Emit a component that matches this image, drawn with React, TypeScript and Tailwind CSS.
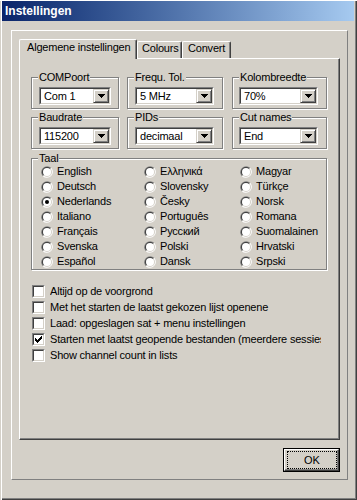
import React from 'react';

const COL1 = ['English', 'Deutsch', 'Nederlands', 'Italiano', 'Français', 'Svenska', 'Español'];
const COL2 = ['Ελληνικά', 'Slovensky', 'Česky', 'Português', 'Русский', 'Polski', 'Dansk'];
const COL3 = ['Magyar', 'Türkçe', 'Norsk', 'Romana', 'Suomalainen', 'Hrvatski', 'Srpski'];

const OPTIONS = [
  { label: 'Altijd op de voorgrond', checked: false },
  { label: 'Met het starten de laatst gekozen lijst openene', checked: false },
  { label: 'Laad: opgeslagen sat + menu instellingen', checked: false },
  { label: 'Starten met laatst geopende bestanden (meerdere sessies)', checked: true },
  { label: 'Show channel count in lists', checked: false },
];

// klein zwart pijltje in de combo knop
function DownArrow() {
  return (
    <svg width="7" height="4" viewBox="0 0 7 4" shapeRendering="crispEdges">
      <rect x="0" y="0" width="7" height="1" fill="#000" />
      <rect x="1" y="1" width="5" height="1" fill="#000" />
      <rect x="2" y="2" width="3" height="1" fill="#000" />
      <rect x="3" y="3" width="1" height="1" fill="#000" />
    </svg>
  );
}

function Combo({ value, w }: { value: string; w: string }) {
  return (
    <div className={`${w} h-[18px] border border-t-[#808080] border-l-[#808080] border-r-white border-b-white`}>
      <div className="h-full flex border border-t-[#404040] border-l-[#404040] border-r-[#D4D0C8] border-b-[#D4D0C8] bg-white">
        <span className="flex-1 pl-[3px] leading-[14px] whitespace-nowrap overflow-hidden">{value}</span>
        <div className="w-[16px] h-[14px] flex items-center justify-center bg-[#D4D0C8] border border-t-[#D4D0C8] border-l-[#D4D0C8] border-r-[#404040] border-b-[#404040] shadow-[inset_1px_1px_0_#fff,inset_-1px_-1px_0_#808080]">
          <DownArrow />
        </div>
      </div>
    </div>
  );
}

function GroupBox({ label, className, children }: { label: string; className: string; children?: React.ReactNode }) {
  return (
    <div className={`relative border border-[#808080] shadow-[inset_1px_1px_0_#fff,1px_1px_0_#fff] ${className}`}>
      <span className="absolute left-[6px] top-[-7px] bg-[#D4D0C8] px-[1px] leading-[13px] whitespace-nowrap">{label}</span>
      {children}
    </div>
  );
}

function Radio({ label, checked }: { label: string; checked?: boolean }) {
  return (
    <div className="h-[15px] flex items-center">
      <svg width="12" height="12" viewBox="0 0 12 12" className="shrink-0">
        <path d="M1.76 10.24 A6 6 0 0 1 10.24 1.76 Z" fill="#808080" />
        <path d="M10.24 1.76 A6 6 0 0 1 1.76 10.24 Z" fill="#fff" />
        <path d="M2.46 9.54 A5 5 0 0 1 9.54 2.46 Z" fill="#404040" />
        <path d="M9.54 2.46 A5 5 0 0 1 2.46 9.54 Z" fill="#D4D0C8" />
        <circle cx="6" cy="6" r="4" fill="#fff" />
        {checked && <circle cx="6" cy="6" r="2" fill="#000" />}
      </svg>
      <span className="ml-[4px] whitespace-nowrap">{label}</span>
    </div>
  );
}

function CheckMark() {
  return (
    <svg width="7" height="7" viewBox="0 0 7 7" shapeRendering="crispEdges">
      <rect x="0" y="2" width="1" height="3" fill="#000" />
      <rect x="1" y="3" width="1" height="3" fill="#000" />
      <rect x="2" y="4" width="1" height="3" fill="#000" />
      <rect x="3" y="3" width="1" height="3" fill="#000" />
      <rect x="4" y="2" width="1" height="3" fill="#000" />
      <rect x="5" y="1" width="1" height="3" fill="#000" />
      <rect x="6" y="0" width="1" height="3" fill="#000" />
    </svg>
  );
}

function CheckRow({ label, checked }: { label: string; checked: boolean }) {
  return (
    <div className="h-[16px] flex items-center">
      <div className="w-[13px] h-[13px] shrink-0 border border-t-[#808080] border-l-[#808080] border-r-white border-b-white">
        <div className="w-full h-full flex items-center justify-center bg-white border border-t-[#404040] border-l-[#404040] border-r-[#D4D0C8] border-b-[#D4D0C8]">
          {checked && <CheckMark />}
        </div>
      </div>
      <span className="ml-[5px] w-[271px] overflow-hidden whitespace-nowrap">{label}</span>
    </div>
  );
}

export default function App() {
  return (
    <div className="w-[357px] h-[500px] bg-[#D4D0C8] text-black text-[11px] tracking-[-0.2px] font-['Liberation_Sans',Arial,sans-serif]">
      <div className="w-[357px] h-[499px] bg-[#D4D0C8] shadow-[inset_1px_0_0_#D4D0C8,inset_2px_0_0_#fff,inset_-1px_-1px_0_#404040,inset_-2px_-2px_0_#808080]">
        {/* Titelbalk */}
        <div className="mt-[1px] ml-[2px] w-[352px] h-[20px] bg-linear-to-r from-[#0A246A] to-[#A6CAF0] flex items-center pl-[3px]">
          <span className="text-white font-bold text-[12px] tracking-normal">Instellingen</span>
        </div>

        {/* Buitenkader */}
        <div className="mt-[9px] ml-[11px] w-[337px] h-[450px] border border-t-white border-l-white border-r-[#808080] border-b-[#808080] pl-[7px] pt-[8px]">
          {/* Tabs */}
          <div className="flex items-end h-[20px]">
            <div className="relative z-10 w-[118px] h-[20px] bg-[#D4D0C8] pl-[7px] pt-[1px] leading-[13px] whitespace-nowrap border-l border-t border-r border-l-white border-t-white border-r-[#404040] rounded-tl-[2px] rounded-tr-[2px] shadow-[inset_-1px_0_0_#808080]">
              Algemene instellingen
            </div>
            <div className="w-[45px] h-[18px] pl-[4px] leading-[13px] whitespace-nowrap border-l border-t border-r border-l-white border-t-white border-r-[#404040] rounded-tl-[2px] rounded-tr-[2px] shadow-[inset_-1px_0_0_#808080]">
              Colours
            </div>
            <div className="w-[49px] h-[18px] pl-[5px] leading-[13px] whitespace-nowrap border-l border-t border-r border-l-white border-t-white border-r-[#404040] rounded-tl-[2px] rounded-tr-[2px] shadow-[inset_-1px_0_0_#808080]">
              Convert
            </div>
          </div>

          {/* Tabblad */}
          <div className="relative -mt-[1px] w-[321px] h-[382px] bg-[#D4D0C8] border border-t-white border-l-white border-r-[#404040] border-b-[#404040] shadow-[inset_-1px_-1px_0_#808080] pl-[11px] pt-[18px]">
            <div className="flex gap-[8px]">
              <GroupBox label="COMPoort" className="w-[88px] h-[32px] pl-[7px] pt-[9px]">
                <Combo value="Com 1" w="w-[72px]" />
              </GroupBox>
              <GroupBox label="Frequ. Tol." className="w-[96px] h-[32px] pl-[7px] pt-[9px]">
                <Combo value="5 MHz" w="w-[79px]" />
              </GroupBox>
              <GroupBox label="Kolombreedte" className="ml-[1px] w-[95px] h-[32px] pl-[6px] pt-[9px]">
                <Combo value="70%" w="w-[79px]" />
              </GroupBox>
            </div>
            <div className="flex gap-[8px] mt-[8px]">
              <GroupBox label="Baudrate" className="w-[88px] h-[32px] pl-[7px] pt-[9px]">
                <Combo value="115200" w="w-[72px]" />
              </GroupBox>
              <GroupBox label="PIDs" className="w-[96px] h-[32px] pl-[7px] pt-[9px]">
                <Combo value="decimaal" w="w-[79px]" />
              </GroupBox>
              <GroupBox label="Cut names" className="ml-[1px] w-[95px] h-[32px] pl-[6px] pt-[9px]">
                <Combo value="End" w="w-[79px]" />
              </GroupBox>
            </div>

            <GroupBox label="Taal" className="mt-[9px] w-[296px] h-[112px] pl-[9px] pt-[5px]">
              <div className="grid grid-cols-[103px_96px_1fr]">
                <div className="flex flex-col">
                  {COL1.map((l) => (
                    <Radio key={l} label={l} checked={l === 'Nederlands'} />
                  ))}
                </div>
                <div className="flex flex-col">
                  {COL2.map((l) => (
                    <Radio key={l} label={l} />
                  ))}
                </div>
                <div className="flex flex-col">
                  {COL3.map((l) => (
                    <Radio key={l} label={l} />
                  ))}
                </div>
              </div>
            </GroupBox>

            <div className="mt-[13px] ml-[1px] flex flex-col">
              {OPTIONS.map((o) => (
                <CheckRow key={o.label} label={o.label} checked={o.checked} />
              ))}
            </div>
          </div>

          {/* OK knop */}
          <div className="w-[321px] flex justify-end mt-[8px]">
            <div className="w-[57px] h-[24px] border border-black">
              <div className="w-full h-full border border-t-white border-l-white border-r-[#404040] border-b-[#404040] shadow-[inset_-1px_-1px_0_#808080] pl-[2px] pt-[1px] pr-[1px] pb-[1px]">
                <div className="w-full h-full border border-dotted border-black flex items-center justify-center leading-[13px] tracking-normal">
                  OK
                </div>
              </div>
            </div>
          </div>
        </div>
      </div>
    </div>
  );
}
